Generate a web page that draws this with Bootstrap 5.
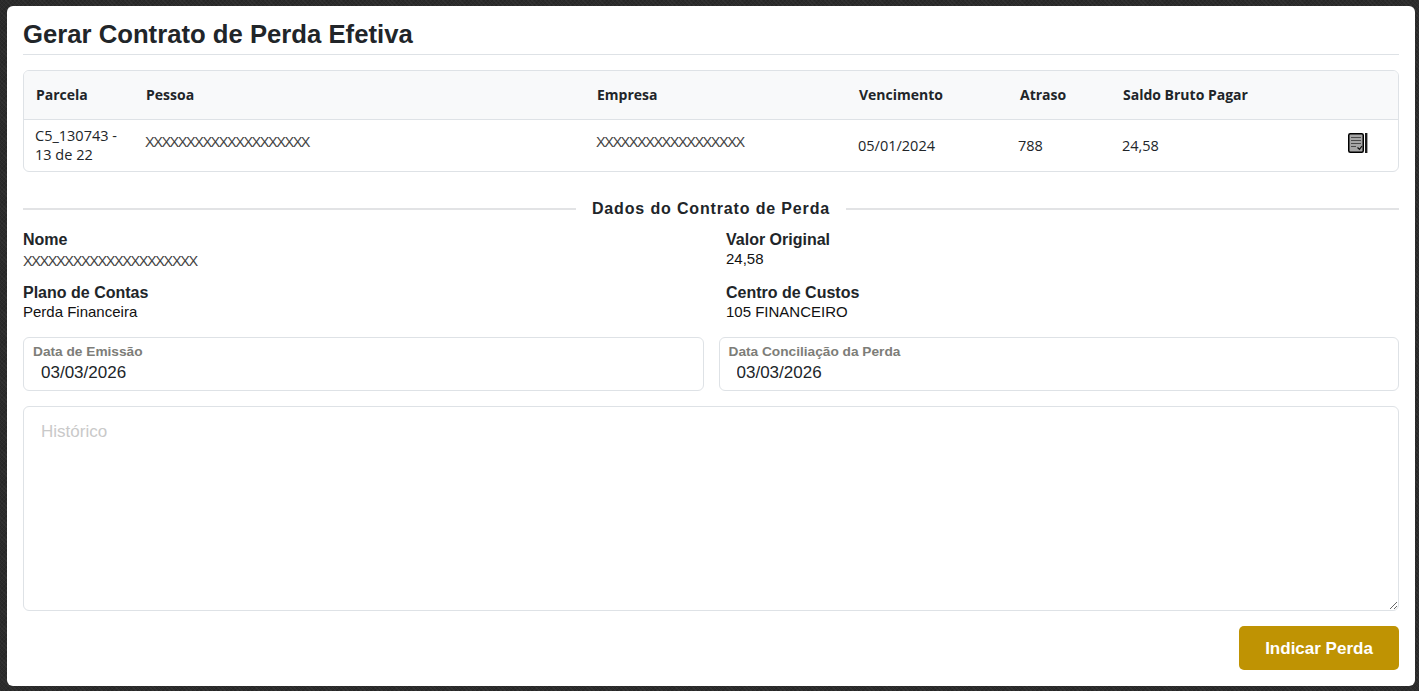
<!DOCTYPE html>
<html lang="pt-BR">
<head>
<meta charset="utf-8">
<title>Gerar Contrato de Perda Efetiva</title>
<link href="https://cdn.jsdelivr.net/npm/bootstrap@5.3.0/dist/css/bootstrap.min.css" rel="stylesheet">
<style>
html,body{height:100%;overflow:hidden}
body{background-color:#2b2b2b;background-image:repeating-linear-gradient(45deg,rgba(255,255,255,.035) 0 1px,transparent 1px 3px),repeating-linear-gradient(-45deg,rgba(0,0,0,.12) 0 1px,transparent 1px 3px);font-family:"Liberation Sans",Arial,sans-serif;color:#212529;padding:6px 4px 5px 7px}
.sheet{background:#fff;border-radius:6px;height:680px;padding:12px 16px 16px;display:flex;flex-direction:column}
.sheet-title{font-size:25.7px;font-weight:700;line-height:33px;margin:0;padding-bottom:3px;border-bottom:1px solid #dee2e6;color:#212529}
.grid-box{margin-top:15px;border:1px solid #dee2e6;border-radius:6px;overflow:hidden}
.grid-box table{table-layout:fixed;width:100%;margin:0;font-family:"Open Sans","Noto Sans",sans-serif;font-size:14px}
.grid-box th{background:#f8f9fa;height:48px;padding:0 0 0 12px;font-weight:700;vertical-align:middle;border-bottom:1px solid #dee2e6;color:#212529}
.grid-box td{height:52px;padding:0 0 0 11px;vertical-align:middle;border:0;color:#212529;font-size:14.5px}
.grid-box td.td-low{padding-top:1px}
.grid-box td.td-tight{padding-left:10px}
.cell-mask{font-family:"Liberation Sans",sans-serif;font-size:14.5px;letter-spacing:-1.47px;color:#444;position:relative;top:-3px}
.parcel-text{line-height:19px;display:block}
.sep-head{display:flex;align-items:center;margin-top:27px;height:20px;gap:16px;font-size:16px;font-weight:700;letter-spacing:.85px;color:#212529}
.sep-head::before,.sep-head::after{content:"";flex:1;border-top:2px solid #e2e3e5}
.info-grid{display:grid;grid-template-columns:703px 1fr;margin-top:11px}
.info-item{height:53px;font-size:15px;line-height:17px}
.info-item b{display:block;font-size:16px;line-height:20px;color:#212529}
.info-item span{color:#111}
.mask-val{font-size:14.5px;letter-spacing:-1.4px;color:#444!important;position:relative;top:2px}
.date-row{display:grid;grid-template-columns:1fr 1fr;gap:15px;margin-top:1px}
.date-box{height:54px;border:1px solid #dee2e6;border-radius:6px;padding:6px 9px 0}
.date-box label{display:block;font-size:13.7px;font-weight:700;line-height:16px;color:#7d7d78;margin-bottom:1px}
.date-box input{display:block;border:0;outline:0;padding:0 0 0 8px;width:100%;font-size:17px;line-height:24px;height:24px;background:transparent;color:#212529;font-family:"Liberation Sans",sans-serif}
.hist{margin-top:15px;height:205px;display:block;width:100%;border:1px solid #dee2e6;border-radius:6px;padding:14px 17px;font-size:17px;line-height:22px;outline:0;font-family:"Liberation Sans",sans-serif}
.hist::placeholder{color:#c9c9c9;opacity:1}
.foot-row{display:flex;justify-content:flex-end;margin-top:15px}
.btn-perda{width:160px;height:44px;background:#bf9303;border:0;border-radius:5px;color:#fff;font-weight:700;font-size:17px;font-family:"Liberation Sans",sans-serif;padding:1px 0 0}
.btn-perda:hover{background:#bf9303;color:#fff}
.doc-ico{display:block;margin-left:2px;position:relative;top:-2px}
</style>
</head>
<body>
<div class="sheet">
  <h1 class="sheet-title">Gerar Contrato de Perda Efetiva</h1>
  <div class="grid-box">
    <table class="table mb-0">
      <colgroup><col style="width:110px"><col style="width:451px"><col style="width:262px"><col style="width:161px"><col style="width:103px"><col style="width:224px"><col></colgroup>
      <thead><tr><th>Parcela</th><th>Pessoa</th><th>Empresa</th><th>Vencimento</th><th>Atraso</th><th>Saldo Bruto Pagar</th><th></th></tr></thead>
      <tbody><tr>
        <td><span class="parcel-text">C5_130743 -<br>13 de 22</span></td>
        <td><span class="cell-mask">XXXXXXXXXXXXXXXXXXXX</span></td>
        <td><span class="cell-mask">XXXXXXXXXXXXXXXXXX</span></td>
        <td class="td-low">05/01/2024</td>
        <td class="td-low td-tight">788</td>
        <td class="td-low">24,58</td>
        <td><svg class="doc-ico" width="20" height="20" viewBox="0 0 20 20" aria-hidden="true">
          <rect x="0.75" y="0.75" width="14.5" height="18.5" rx="1.5" fill="#a6a6a6" stroke="#000" stroke-width="1.5"/>
          <path d="M3 4.5h10M3 7.5h10M3 10.5h10M3 13.5h5" stroke="#4a4a4a" stroke-width="1"/>
          <path d="M9.5 14.5l2 1.8 2.5-3.3" fill="none" stroke="#111" stroke-width="1.2"/>
          <rect x="17" y="0" width="2.4" height="20" fill="#1c1c1c"/>
        </svg></td>
      </tr></tbody>
    </table>
  </div>
  <div class="sep-head">Dados do Contrato de Perda</div>
  <div class="info-grid">
    <div class="info-item"><b>Nome</b><span class="mask-val">XXXXXXXXXXXXXXXXXXXXX</span></div>
    <div class="info-item"><b>Valor Original</b><span>24,58</span></div>
    <div class="info-item"><b>Plano de Contas</b><span>Perda Financeira</span></div>
    <div class="info-item"><b>Centro de Custos</b><span>105 FINANCEIRO</span></div>
  </div>
  <div class="date-row">
    <div class="date-box"><label for="d1">Data de Emissão</label><input id="d1" type="text" value="03/03/2026"></div>
    <div class="date-box"><label for="d2">Data Conciliação da Perda</label><input id="d2" type="text" value="03/03/2026"></div>
  </div>
  <textarea class="hist" placeholder="Histórico"></textarea>
  <div class="foot-row"><button type="button" class="btn btn-perda">Indicar Perda</button></div>
</div>
<script src="https://cdn.jsdelivr.net/npm/bootstrap@5.3.0/dist/js/bootstrap.bundle.min.js"></script>
</body>
</html>
